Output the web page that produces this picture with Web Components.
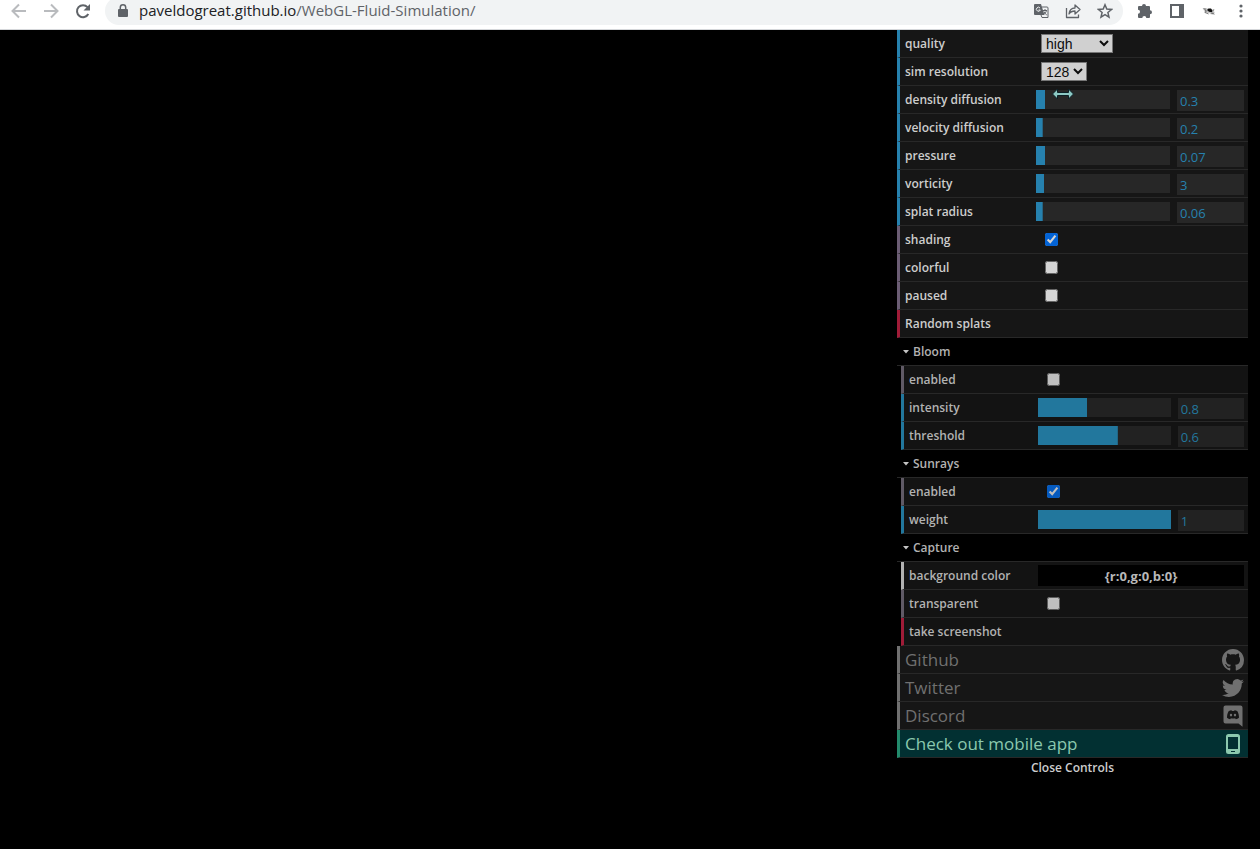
<!DOCTYPE html>
<html lang="en">
<head>
<meta charset="utf-8">
<title>WebGL Fluid Simulation</title>
<style>
  html { height: 100%; }
  body {
    margin: 0;
    min-height: 100%;
    display: flex;
    flex-direction: column;
    background: #000;
    font-family: "Open Sans", "Noto Sans", sans-serif;
  }
</style>
</head>
<body>
<browser-bar></browser-bar>
<fluid-stage>
  <gui-panel>
    <gui-select label="quality" options="high,medium,low,very low" size="72"></gui-select>
    <gui-select label="sim resolution" options="128,32,64,256" size="46"></gui-select>
    <gui-number label="density diffusion" value="0.3" fill="7"></gui-number>
    <gui-number label="velocity diffusion" value="0.2" fill="5"></gui-number>
    <gui-number label="pressure" value="0.07" fill="7"></gui-number>
    <gui-number label="vorticity" value="3" fill="6"></gui-number>
    <gui-number label="splat radius" value="0.06" fill="5"></gui-number>
    <gui-check label="shading" checked></gui-check>
    <gui-check label="colorful"></gui-check>
    <gui-check label="paused"></gui-check>
    <gui-action label="Random splats"></gui-action>
    <gui-folder label="Bloom">
      <gui-check label="enabled"></gui-check>
      <gui-number label="intensity" value="0.8" fill="37"></gui-number>
      <gui-number label="threshold" value="0.6" fill="60"></gui-number>
    </gui-folder>
    <gui-folder label="Sunrays">
      <gui-check label="enabled" checked></gui-check>
      <gui-number label="weight" value="1" fill="100"></gui-number>
    </gui-folder>
    <gui-folder label="Capture">
      <gui-color label="background color" value="{r:0,g:0,b:0}"></gui-color>
      <gui-check label="transparent"></gui-check>
      <gui-action label="take screenshot"></gui-action>
    </gui-folder>
    <gui-link label="Github">
      <svg width="22" height="22" viewBox="0 0 16 16" fill="currentColor"><path d="M8 0C3.58 0 0 3.58 0 8c0 3.54 2.29 6.53 5.47 7.59.4.07.55-.17.55-.38 0-.19-.01-.82-.01-1.49-2.01.37-2.53-.49-2.69-.94-.09-.23-.48-.94-.82-1.13-.28-.15-.68-.52-.01-.53.63-.01 1.08.58 1.23.82.72 1.21 1.87.87 2.33.66.07-.52.28-.87.51-1.07-1.78-.2-3.64-.89-3.64-3.95 0-.87.31-1.59.82-2.15-.08-.2-.36-1.02.08-2.12 0 0 .67-.21 2.2.82.64-.18 1.32-.27 2-.27s1.36.09 2 .27c1.53-1.04 2.2-.82 2.2-.82.44 1.1.16 1.92.08 2.12.51.56.82 1.27.82 2.15 0 3.07-1.87 3.75-3.65 3.95.29.25.54.73.54 1.48 0 1.07-.01 1.93-.01 2.2 0 .21.15.46.55.38A8.01 8.01 0 0 0 16 8c0-4.42-3.58-8-8-8z"/></svg>
    </gui-link>
    <gui-link label="Twitter">
      <svg width="22" height="22" viewBox="0 0 24 24" fill="currentColor"><path d="M23.95 4.57a10 10 0 0 1-2.82.77 4.96 4.96 0 0 0 2.16-2.72c-.95.55-2 .96-3.13 1.18a4.92 4.92 0 0 0-8.38 4.48C7.69 8.1 4.07 6.13 1.64 3.16a4.93 4.93 0 0 0 1.52 6.57 4.9 4.9 0 0 1-2.23-.61v.06a4.92 4.92 0 0 0 3.95 4.83 5 5 0 0 1-2.21.08 4.94 4.94 0 0 0 4.6 3.42A9.87 9.87 0 0 1 0 19.54a14 14 0 0 0 7.55 2.21c9.05 0 14-7.5 14-13.98 0-.21 0-.42-.02-.63a9.94 9.94 0 0 0 2.42-2.57z"/></svg>
    </gui-link>
    <gui-link label="Discord">
      <svg width="22" height="22" viewBox="0 0 22 22" fill="currentColor"><path fill-rule="evenodd" d="M3.500 .5h15a2 2 0 0 1 2 2v19.200l-4-3.200H3.500a2 2 0 0 1-2-2V2.500a2 2 0 0 1 2-2zM5 12.800c1 .9 2 1.300 3.200 1.400l.7-1a10 10 0 0 0 4.200 0l.7 1c1.200-.1 2.200-.5 3.200-1.400 0-2.500-.5-4.600-1.600-6.500-.9-.6-1.900-1-2.900-1.100l-.4.8a8 8 0 0 0-2.200 0l-.4-.8c-1 .1-2 .5-2.900 1.100C5.500 8.200 5 10.300 5 12.800zM9 8.800a1.200 1.300 0 1 1 0 2.600 1.200 1.300 0 0 1 0-2.600zM13 8.800a1.200 1.300 0 1 1 0 2.600 1.200 1.300 0 0 1 0-2.600z"/></svg>
    </gui-link>
    <gui-link label="Check out mobile app" featured>
      <svg width="22" height="22" viewBox="0 0 22 22" fill="currentColor"><path fill-rule="evenodd" d="M6.500 1h9a2.500 2.500 0 0 1 2.500 2.500v15a2.500 2.500 0 0 1-2.500 2.500h-9A2.500 2.500 0 0 1 4 18.500v-15A2.500 2.500 0 0 1 6.500 1zM6 4v12h10V4zM9 18v1h4v-1z"/></svg>
    </gui-link>
  </gui-panel>
</fluid-stage>

<script>
  function define(name, markup, setup) {
    const template = document.createElement('template');
    template.innerHTML = markup;
    customElements.define(name, class extends HTMLElement {
      constructor() {
        super();
        this.attachShadow({ mode: 'open' }).append(template.content.cloneNode(true));
      }
      connectedCallback() {
        if (setup) setup(this, this.shadowRoot);
      }
    });
  }

  const setLabel = (host, root) => {
    root.querySelector('.name').textContent = host.getAttribute('label');
  };

  /* Box shared by every row of the control panel */
  const rowStyle = `
    :host {
      display: flex;
      align-items: center;
      box-sizing: border-box;
      height: 28px;
      padding: 0 4px 0 5px;
      border-left: 3px solid var(--kind);
      border-bottom: 1px solid #282828;
      background: var(--row-bg, #161616);
      color: var(--row-fg, #cdcdcd);
      font-size: 12px;
      font-weight: 600;
      line-height: 27px;
    }
    .name { flex: 0 0 var(--name-width, 131px); white-space: nowrap; }
    .control { flex: 1; display: flex; align-items: center; min-width: 0; }
    input, select, button { margin: 0; box-sizing: border-box; }
  `;

  define('browser-bar', `
    <style>
      :host {
        display: flex;
        align-items: flex-end;
        box-sizing: border-box;
        height: 30px;
        padding: 0 11px 4px 11px;
        overflow: hidden;
        background: #fff;
        border-bottom: 1px solid #d5d7da;
        color: #5f6368;
      }
      button { display: flex; padding: 0; border: 0; background: none; color: inherit; }
      button:disabled { color: #b9bbbe; }
      svg { display: block; fill: none; stroke: currentColor; stroke-width: 2; }
      .nav { display: flex; gap: 16px; padding-bottom: 6px; }
      .pill {
        flex: 1;
        display: flex;
        align-items: center;
        box-sizing: border-box;
        height: 28px;
        margin: 0 14px;
        padding: 0 10px;
        border-radius: 14px;
        background: #f1f3f4;
      }
      a { flex: 1; margin-left: 8px; padding-bottom: 2px; color: #5f6368; font-size: 15px; line-height: 20px; text-decoration: none; }
      b { font-weight: 400; color: #202124; }
      .tools { display: flex; gap: 16px; }
      .ext { padding-bottom: 6px; }
    </style>
    <div class="nav">
      <button disabled aria-label="Back"><svg width="16" height="16" viewBox="0 0 16 16"><path d="M15 8H2M8 1.500L1.500 8 8 14.500"/></svg></button>
      <button disabled aria-label="Forward"><svg width="16" height="16" viewBox="0 0 16 16"><path d="M1 8h13M8 1.500L14.500 8 8 14.500"/></svg></button>
      <button aria-label="Reload"><svg width="16" height="16" viewBox="0 0 16 16"><path d="M13.300 11A6 6 0 1 1 12.500 4.200"/><path d="M15 1v6.500H8.500z" fill="currentColor" stroke="none"/></svg></button>
    </div>
    <div class="pill">
      <svg width="16" height="16" viewBox="0 0 16 16"><path d="M4 6h8a1 1 0 0 1 1 1v6a1 1 0 0 1-1 1H4a1 1 0 0 1-1-1V7a1 1 0 0 1 1-1z" fill="currentColor" stroke="none"/><path d="M5.300 7V4.500a2.700 2.700 0 0 1 5.400 0V7" stroke-width="1.500"/></svg>
      <a href="#"><b>paveldogreat.github.io</b>/WebGL-Fluid-Simulation/</a>
      <div class="tools">
        <button aria-label="Translate"><svg width="16" height="16" viewBox="0 0 16 16"><path d="M2 1h6l3.500 11H2a1 1 0 0 1-1-1V2a1 1 0 0 1 1-1z" fill="currentColor" stroke="none"/><path d="M8.500 4H14a1 1 0 0 1 1 1v9.500H9L8 12M10 7.500h4M12 6v1.500M13.500 7.500c-.5 2-1.500 3-3 4M11 8.500c.5 1.500 1.500 2.500 2.800 3.500" stroke-width="1"/><path d="M7 5a2 2 0 1 0 .3 2H5.500" stroke="#f1f3f4" stroke-width="1"/></svg></button>
        <button aria-label="Share"><svg width="16" height="16" viewBox="0 0 16 16" stroke-linejoin="round"><path d="M1.500 5v9.500h12V11.500M4 11C4.500 7 6.500 5 10 5V2l5 4.500L10 11V8C7.500 8 5.500 8.500 4 11z" stroke-width="1.300"/></svg></button>
        <button aria-label="Bookmark"><svg width="16" height="16" viewBox="0 0 16 16"><path d="M8 1.800l1.800 4.300 4.700.4-3.600 3 1.100 4.600L8 11.700l-4 2.400 1.100-4.600-3.600-3 4.700-.4z" stroke-width="1.500"/></svg></button>
      </div>
    </div>
    <div class="tools ext">
      <button aria-label="Extensions"><svg width="16" height="16" viewBox="0 0 16 16"><path d="M5 3a2 2 0 0 1 4 0h3a1 1 0 0 1 1 1v3.200a2 2 0 0 1 0 4V14a1 1 0 0 1-1 1H9.300a2 2 0 0 0-4 0H2a1 1 0 0 1-1-1v-3.200a2 2 0 0 0 0-4V4a1 1 0 0 1 1-1z" fill="currentColor" stroke="none"/></svg></button>
      <button aria-label="Side panel"><svg width="16" height="16" viewBox="0 0 16 16"><path d="M2 2h12v12H2z"/><path d="M10 1h5v14h-5z" fill="currentColor" stroke="none"/></svg></button>
      <button aria-label="Profile"><svg width="16" height="16" viewBox="0 0 16 16"><g stroke="none"><ellipse cx="8" cy="8" rx="6" ry="2" transform="rotate(18 8 8)" fill="#c4c4c4"/><path d="M1.500 5l4 .8L4 7zM3 8.500l4 1.500 1 1.500-4-1.500zM9 11l5 .5-2-2z" fill="#777"/><path d="M6 7l1.500-1.500L10 5.500l1.500 2-.5 1.700-3-.4z" fill="#111"/><path d="M11.500 6.500l2 .3-1 1zM4 7.500h1.500v1H4z" fill="#333"/></g></svg></button>
      <button aria-label="Menu"><svg width="16" height="16" viewBox="0 0 16 16"><g fill="currentColor" stroke="none"><circle cx="8" cy="3" r="1.600"/><circle cx="8" cy="8" r="1.600"/><circle cx="8" cy="13" r="1.600"/></g></svg></button>
    </div>
  `);

  define('fluid-stage', `
    <style>
      :host { display: flex; flex: 1; justify-content: flex-end; padding-right: 12px; background: #000; position: relative; }
      .pointer { position: absolute; top: 58px; right: 186px; }
    </style>
    <slot></slot>
    <svg class="pointer" width="22" height="12" viewBox="0 0 22 12"><path d="M.5 6l5-5v3.500h11V1l5 5-5 5V7.500h-11V11z" fill="#8cc9c4" stroke="#0c2026" stroke-width="1"/></svg>
  `);

  define('gui-panel', `
    <style>
      :host { display: block; width: 351px; }
      button {
        display: block; width: 100%; height: 20px; padding: 0; border: 0;
        background: #000; color: #cdcdcd;
        font: 600 12px/20px "Open Sans", "Noto Sans", sans-serif;
      }
    </style>
    <slot></slot>
    <button>Close Controls</button>
  `);

  define('gui-folder', `
    <style>
      :host {
        display: block;
        --row-bg: #131313; --row-fg: #b2b2b2; --accent: #22779d; --field: #222;
        --check: #605a66; --dim: .73; --name-width: 129px;
      }
      button {
        display: flex; align-items: center; gap: 4px; box-sizing: border-box; width: 100%; height: 28px;
        padding: 0 0 0 6px; border: 0; border-bottom: 1px solid #282828;
        background: #000; color: #b2b2b2;
        font: 600 12px/27px "Open Sans", "Noto Sans", sans-serif;
      }
      .rows { padding-left: 4px; }
    </style>
    <button aria-expanded="true"><svg width="6" height="4" viewBox="0 0 6 4"><path d="M0 0h6L3 3.500z" fill="#c4c4c4"/></svg><span class="name"></span></button>
    <div class="rows"><slot></slot></div>
  `, setLabel);

  define('gui-select', `
    <style>${rowStyle}
      :host { --kind: var(--accent, #2681ae); }
      select {
        height: 19px; margin-left: 5px; padding: 0;
        border: 1px solid #767676; border-radius: 0;
        background-color: #d0d0d0; color: #0c0c0c;
        font: 14px "Liberation Sans", sans-serif;
      }
    </style>
    <label class="name" for="field"></label>
    <div class="control"><select id="field"></select></div>
  `, (host, root) => {
    setLabel(host, root);
    const select = root.querySelector('select');
    select.style.width = host.getAttribute('size') + 'px';
    host.getAttribute('options').split(',').forEach(o => select.add(new Option(o)));
  });

  define('gui-number', `
    <style>${rowStyle}
      :host { --kind: var(--accent, #2681ae); }
      .control { display: grid; grid-template-columns: 2fr 1fr; align-items: start; gap: 7px; height: 19px; }
      input { width: 100%; min-width: 0; border: 0; border-radius: 0; background: var(--field, #272727); }
      input[type=range] {
        appearance: none; height: 19px;
        background: linear-gradient(var(--kind), var(--kind)) 0 0 / var(--fill) 100% no-repeat var(--field, #272727);
      }
      input[type=range]::-webkit-slider-thumb { appearance: none; width: 0; height: 19px; }
      input[type=text] {
        height: 21px; padding: 0 3px;
        color: var(--kind);
        font: 13px "Open Sans", "Noto Sans", sans-serif;
      }
    </style>
    <label class="name" for="field"></label>
    <div class="control">
      <input type="range" min="0" max="100">
      <input type="text" id="field">
    </div>
  `, (host, root) => {
    setLabel(host, root);
    const range = root.querySelector('[type=range]');
    range.value = host.getAttribute('fill');
    range.style.setProperty('--fill', host.getAttribute('fill') + '%');
    range.setAttribute('aria-label', host.getAttribute('label'));
    root.querySelector('[type=text]').value = host.getAttribute('value');
  });

  define('gui-check', `
    <style>${rowStyle}
      :host { --kind: var(--check, #6b5d74); }
      input { width: 13px; height: 13px; margin-left: 9px; opacity: var(--dim, .82); }
    </style>
    <label class="name" for="field"></label>
    <div class="control"><input type="checkbox" id="field"></div>
  `, (host, root) => {
    setLabel(host, root);
    root.querySelector('input').checked = host.hasAttribute('checked');
  });

  define('gui-action', `
    <style>${rowStyle}
      :host { --kind: #a01c38; }
      button { flex: 1; padding: 0; border: 0; background: none; color: inherit; font: inherit; text-align: left; }
    </style>
    <button class="name"></button>
  `, setLabel);

  define('gui-color', `
    <style>${rowStyle}
      :host { --kind: #b2b2b2; }
      input {
        width: 100%; height: 21px; padding: 0; border: 0; background: #000; color: #b8b8b8;
        font: 700 13px "Open Sans", "Noto Sans", sans-serif; text-align: center;
      }
    </style>
    <label class="name" for="field"></label>
    <div class="control"><input type="text" id="field"></div>
  `, (host, root) => {
    setLabel(host, root);
    root.querySelector('input').value = host.getAttribute('value');
  });

  define('gui-link', `
    <style>${rowStyle}
      :host { --kind: #707070; color: #707070; font-size: 17px; font-weight: 400; }
      :host([featured]) { --kind: #228a6c; background: #023032; color: #8bc8ae; }
      a { flex: 1; display: flex; align-items: center; justify-content: space-between; color: inherit; text-decoration: none; }
    </style>
    <a href="#"><span class="name"></span><slot></slot></a>
  `, setLabel);
</script>
</body>
</html>
